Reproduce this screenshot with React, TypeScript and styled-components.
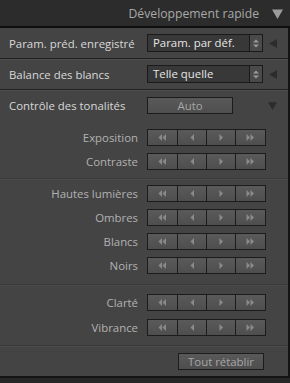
import React from 'react';
import styled, { createGlobalStyle } from 'styled-components';

const Global = createGlobalStyle`
  html, body {
    margin: 0;
    padding: 0;
    background: #262626;
  }
  body {
    font-family: "Open Sans", Lato, sans-serif;
  }
`;

const Root = styled.div`
  width: 290px;
  height: 383px;
  box-sizing: border-box;
  padding-bottom: 5px;
  display: flex;
  flex-direction: column;
  background: #262626;
`;

const Header = styled.div`
  height: 26px;
  flex: 0 0 26px;
  display: flex;
  align-items: center;
  justify-content: flex-end;
  gap: 13px;
  padding-right: 7px;
  background: #2c2c2c;
  color: #a8a8a8;
  font-size: 12.2px;
  border-bottom: 2px solid #0e0e0e;
`;

const Panel = styled.div`
  flex: 1;
  width: 288px;
  background: #444444;
  border-right: 2px solid #141414;
  border-bottom: 2px solid #141414;
  display: flex;
  flex-direction: column;
`;

const Row = styled.div<{ $h: number; $divider?: boolean }>`
  height: ${(p) => p.$h}px;
  flex: 0 0 ${(p) => p.$h}px;
  display: flex;
  align-items: center;
  padding: 0 9px;
  border-bottom: ${(p) => (p.$divider ? '1px solid #202020' : 'none')};
  box-shadow: ${(p) => (p.$divider ? '0 1px 0 #505050' : 'none')};
`;

const Label = styled.div`
  flex: 0 0 138px;
  color: #d8d8d8;
  font-size: 11.4px;
  white-space: nowrap;
`;

const Select = styled.div`
  width: 114px;
  height: 16px;
  display: flex;
  background: #383838;
  border: 1px solid #1a1a1a;
  color: #e6e6e6;
  font-size: 11.4px;
`;

const SelectText = styled.div`
  flex: 1;
  padding-left: 5px;
  line-height: 16px;
  white-space: nowrap;
`;

const Stepper = styled.div`
  width: 12px;
  border-left: 1px solid #1a1a1a;
  background: #4a4a4a;
  display: flex;
  align-items: center;
  justify-content: center;
`;

const SideIcon = styled.div`
  margin-left: auto;
  display: flex;
  align-items: center;
  padding-right: 2px;
`;

const AutoButton = styled.div`
  width: 84px;
  height: 15px;
  border: 1px solid #1c1c1c;
  background: linear-gradient(#595959, #4f4f4f);
  color: #a6a6a6;
  font-size: 11.4px;
  line-height: 15px;
  text-align: center;
`;

const Group = styled.div<{ $pt: number; $pb: number; $gap: number }>`
  display: flex;
  flex-direction: column;
  gap: ${(p) => p.$gap}px;
  padding: ${(p) => p.$pt}px 0 ${(p) => p.$pb}px;
  border-bottom: 1px solid #3a3a3a;
  box-shadow: 0 1px 0 #4b4b4b;
`;

const SliderRow = styled.div`
  display: flex;
  align-items: center;
  height: 17px;
`;

const SliderLabel = styled.div`
  width: 147px;
  text-align: right;
  color: #b2b2b2;
  font-size: 11.4px;
  padding-right: 9px;
  box-sizing: border-box;
  white-space: nowrap;
`;

const Buttons = styled.div`
  display: flex;
  height: 15px;
  border: 1px solid #1c1c1c;
`;

const Seg = styled.div<{ $w: number }>`
  width: ${(p) => p.$w}px;
  display: flex;
  align-items: center;
  justify-content: center;
  background: linear-gradient(#5a5a5a, #4e4e4e);
  & + & {
    border-left: 1px solid #1c1c1c;
  }
`;

const Footer = styled.div`
  flex: 1;
  display: flex;
  justify-content: flex-end;
  align-items: flex-start;
  padding: 7px 24px 0 0;
`;

const ResetButton = styled.div`
  width: 84px;
  height: 15px;
  border: 1px solid #1c1c1c;
  background: linear-gradient(#595959, #4e4e4e);
  color: #a6a6a6;
  font-size: 11.4px;
  line-height: 15px;
  text-align: center;
`;

const Tri = ({ dir, color = '#8a8a8a', size = 8 }: { dir: 'left' | 'right' | 'down'; color?: string; size?: number }) => {
  const pts =
    dir === 'left' ? '8,0 8,8 1,4' : dir === 'right' ? '0,0 0,8 7,4' : '0,1 8,1 4,8';
  return (
    <svg width={size} height={size} viewBox="0 0 8 8">
      <polygon points={pts} fill={color} />
    </svg>
  );
};

const Small = ({ dir, double }: { dir: 'left' | 'right'; double?: boolean }) => {
  const one = (x: number) =>
    dir === 'left' ? `${x + 3.5},0 ${x + 3.5},7 ${x},3.5` : `${x},0 ${x},7 ${x + 3.5},3.5`;
  return (
    <svg width={double ? 9 : 6} height={7} viewBox={double ? '0 0 9 7' : '0 0 6 7'}>
      <polygon points={one(double ? 0.5 : 1.5)} fill="#8a8a8a" />
      {double && <polygon points={one(4.5)} fill="#8a8a8a" />}
    </svg>
  );
};

const UpDown = () => (
  <svg width="6" height="9" viewBox="0 0 6 9">
    <polygon points="0,3.5 6,3.5 3,0.5" fill="#9a9a9a" />
    <polygon points="0,5.5 6,5.5 3,8.5" fill="#9a9a9a" />
  </svg>
);

const Slider: React.FC<{ label: string }> = ({ label }) => (
  <SliderRow>
    <SliderLabel>{label}</SliderLabel>
    <Buttons>
      <Seg $w={29}>
        <Small dir="left" double />
      </Seg>
      <Seg $w={28}>
        <Small dir="left" />
      </Seg>
      <Seg $w={28}>
        <Small dir="right" />
      </Seg>
      <Seg $w={29}>
        <Small dir="right" double />
      </Seg>
    </Buttons>
  </SliderRow>
);

const App: React.FC = () => (
  <>
    <Global />
    <Root>
      <Header>
        <span>Développement rapide</span>
        <Tri dir="down" color="#9c9c9c" size={11} />
      </Header>
      <Panel>
        <Row $h={30} $divider>
          <Label>Param. préd. enregistré</Label>
          <Select>
            <SelectText>Param. par déf.</SelectText>
            <Stepper>
              <UpDown />
            </Stepper>
          </Select>
          <SideIcon>
            <Tri dir="left" color="#2c2c2c" size={9} />
          </SideIcon>
        </Row>
        <Row $h={30} $divider>
          <Label>Balance des blancs</Label>
          <Select>
            <SelectText>Telle quelle</SelectText>
            <Stepper>
              <UpDown />
            </Stepper>
          </Select>
          <SideIcon>
            <Tri dir="left" color="#2c2c2c" size={9} />
          </SideIcon>
        </Row>
        <Row $h={31}>
          <Label>Contrôle des tonalités</Label>
          <AutoButton>Auto</AutoButton>
          <SideIcon>
            <Tri dir="down" color="#2c2c2c" size={9} />
          </SideIcon>
        </Row>
        <Group $pt={8} $pb={8} $gap={7}>
          <Slider label="Exposition" />
          <Slider label="Contraste" />
        </Group>
        <Group $pt={6} $pb={10} $gap={7}>
          <Slider label="Hautes lumières" />
          <Slider label="Ombres" />
          <Slider label="Blancs" />
          <Slider label="Noirs" />
        </Group>
        <Group $pt={9} $pb={9} $gap={8}>
          <Slider label="Clarté" />
          <Slider label="Vibrance" />
        </Group>
        <Footer>
          <ResetButton>Tout rétablir</ResetButton>
        </Footer>
      </Panel>
    </Root>
  </>
);

export default App;
